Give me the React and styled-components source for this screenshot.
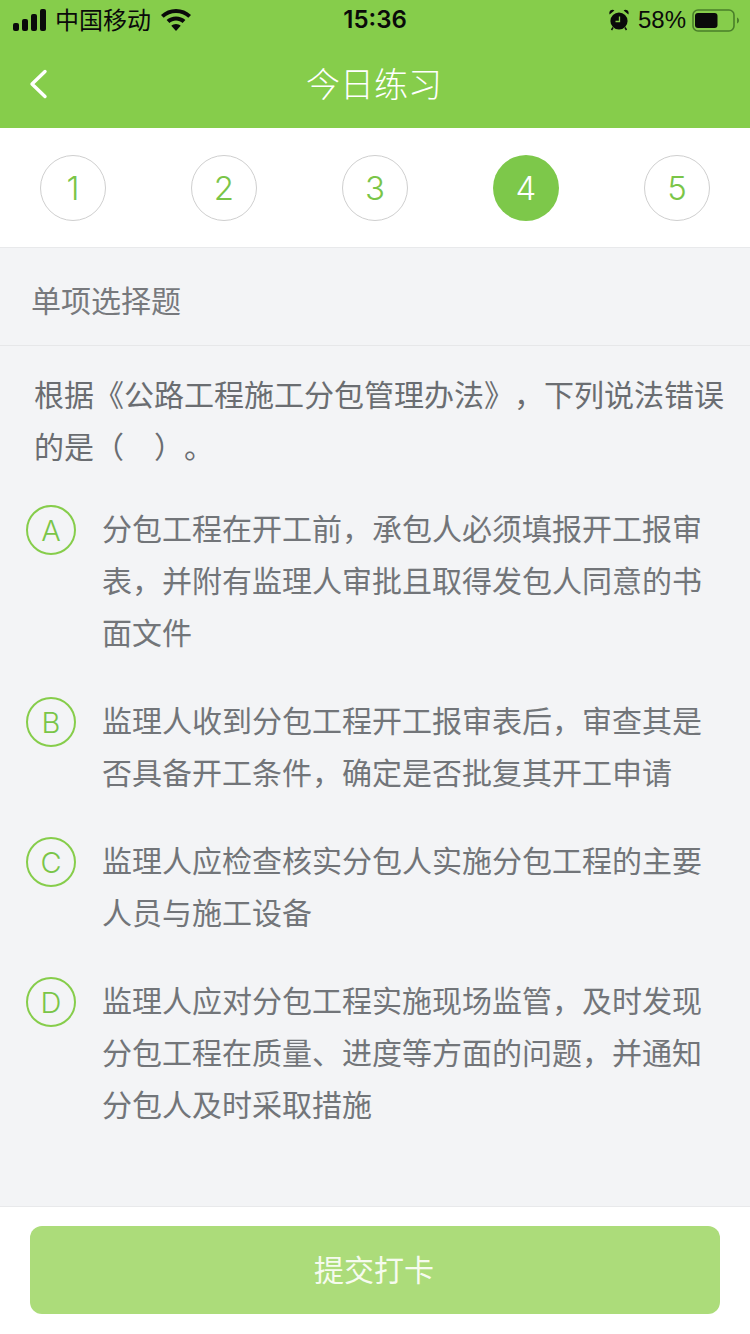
import React from "react";
import styled, { createGlobalStyle } from "styled-components";

const Global = createGlobalStyle`
  html, body { margin: 0; padding: 0; background: #f3f4f6; }
  body { font-family: "Noto Sans CJK SC", "Liberation Sans", sans-serif; text-spacing-trim: space-all; font-kerning: none; }
  * { box-sizing: border-box; }
`;

const Page = styled.div`
  width: 750px;
  height: 1334px;
  display: flex;
  flex-direction: column;
  overflow: hidden;
  background: #f3f4f6;
`;

const Header = styled.header`
  background: #86cd4b;
  height: 128px;
  display: flex;
  flex-direction: column;
`;

const StatusBar = styled.div`
  height: 40px;
  display: grid;
  grid-template-columns: 1fr auto 1fr;
  align-items: center;
  padding: 0 11px 0 13px;
  color: #0a0a0a;
`;

const StatusLeft = styled.div`
  display: flex;
  align-items: center;
  gap: 9px;
  font-size: 24px;
  line-height: 40px;
`;

const Carrier = styled.span`
  margin-right: 1px;
  position: relative;
  top: -1px;
`;

const Time = styled.div`
  font-family: "Inter", "Liberation Sans", sans-serif;
  font-size: 24px;
  font-weight: 600;
  line-height: 40px;
  margin-left: -2px;
`;

const StatusRight = styled.div`
  display: flex;
  align-items: center;
  justify-content: flex-end;
  gap: 10px;
  font-family: "Liberation Sans", sans-serif;
  font-size: 24px;
  line-height: 40px;
`;

const Percent = styled.span`
  margin-right: -4px;
  margin-left: -1px;
`;

const NavBar = styled.div`
  position: relative;
  height: 88px;
  display: flex;
  align-items: center;
  justify-content: center;
  color: #fff;
  font-size: 34px;
  font-weight: 300;
  padding: 0 2px 4px 0;
`;

const Back = styled.button`
  position: absolute;
  left: 28px;
  top: 27px;
  width: 22px;
  height: 34px;
  padding: 0;
  border: 0;
  background: none;
  display: flex;
`;

const Steps = styled.nav`
  height: 120px;
  background: #fff;
  border-bottom: 1px solid #e8e9eb;
  padding: 27px 40px 0;
  display: flex;
  justify-content: space-between;
  align-items: flex-start;
`;

const Step = styled.div`
  width: 66px;
  height: 66px;
  border-radius: 50%;
  border: ${(p) => (p.$active ? "0" : "1px solid #cfcfcf")};
  background: ${(p) => (p.$active ? "#7dc84a" : "#fff")};
  color: ${(p) => (p.$active ? "#fff" : "#7ac548")};
  display: flex;
  align-items: center;
  justify-content: center;
  font-family: "Inter", "Liberation Sans", sans-serif;
  font-weight: 350;
  font-size: 33px;
`;

const Main = styled.main`
  flex: 1;
  min-height: 0;
`;

const SectionTitle = styled.div`
  height: 98px;
  padding: 26px 0 0 31px;
  border-bottom: 1px solid #e6e7e9;
  color: #77797d;
  font-size: 30px;
  font-weight: 400;
  line-height: 50px;
`;

const Question = styled.p`
  margin: 0;
  padding: 21px 20px 0 34px;
  color: #6a6d71;
  font-size: 30px;
  font-weight: 400;
  line-height: 52px;
`;

const Options = styled.ul`
  list-style: none;
  margin: 0;
  padding: 30px 44px 0 26px;
  display: flex;
  flex-direction: column;
  gap: 36px;
`;

const Option = styled.li`
  display: flex;
  align-items: flex-start;
  gap: 26px;
`;

const Letter = styled.span`
  flex: none;
  width: 50px;
  height: 50px;
  margin-top: 4px;
  border-radius: 50%;
  border: 2px solid #86cd4b;
  color: #7ac548;
  display: flex;
  align-items: center;
  justify-content: center;
  font-family: "Inter", "Liberation Sans", sans-serif;
  font-weight: 350;
  font-size: 29px;
`;

const OptionText = styled.span`
  color: #727579;
  font-size: 30px;
  font-weight: 400;
  line-height: 52px;
`;

const Footer = styled.footer`
  height: 128px;
  background: #fff;
  border-top: 1px solid #e8e9eb;
  padding: 19px 30px 0;
`;

const Submit = styled.button`
  width: 100%;
  height: 88px;
  border: 0;
  border-radius: 12px;
  background: #acdc7a;
  color: #f6fbef;
  font-family: inherit;
  font-size: 30px;
  font-weight: 400;
  padding: 0 2px 4px 0;
`;

const Signal = () => (
  <svg width="33" height="22" viewBox="0 0 33 22" fill="#0a0a0a">
    <rect x="0" y="14" width="6" height="8" rx="2" />
    <rect x="9" y="10" width="6" height="12" rx="2" />
    <rect x="18" y="5" width="6" height="17" rx="2" />
    <rect x="27" y="0" width="6" height="22" rx="2" />
  </svg>
);

const Wifi = () => (
  <svg width="30" height="22" viewBox="0 0 30 22" fill="#0a0a0a">
    <path d="M15 0C9.200 0 4 2.200 0 5.900l2.700 2.900C6 5.800 10.300 4 15 4s9 1.800 12.300 4.800L30 5.900C26 2.200 20.800 0 15 0z" />
    <path d="M15 7.500c-3.600 0-6.900 1.400-9.400 3.600l2.800 2.900C10.200 12.400 12.500 11.500 15 11.500s4.800.9 6.600 2.500l2.800-2.900C21.900 8.900 18.600 7.500 15 7.500z" />
    <path d="M15 15c-1.800 0-3.500.7-4.700 1.800L15 22l4.700-5.200C18.500 15.700 16.800 15 15 15z" />
  </svg>
);

const Alarm = () => (
  <svg width="20" height="22" viewBox="0 0 20 22">
    <circle cx="10" cy="12" r="8.600" fill="#0a0a0a" />
    <path d="M10.500 7.500v5H6.500" fill="none" stroke="#86cd4b" strokeWidth="1.300" />
    <path d="M.6 5.500 5.400 1.400C4.400.6 2.900.6 1.700 1.300.4 2.200 0 4 .6 5.500zM19.400 5.500 14.600 1.400c1-.8 2.500-.8 3.700-.1 1.300.9 1.700 2.700 1.100 4.200z" fill="#0a0a0a" />
    <path d="M4 18.500 2.500 21M16 18.500l1.500 2.500" stroke="#0a0a0a" strokeWidth="1.500" />
  </svg>
);

const Battery = () => (
  <svg width="47" height="23" viewBox="0 0 47 23">
    <rect x="1" y="1" width="41" height="21" rx="5" fill="none" stroke="#4a7f2a" strokeWidth="1.600" />
    <rect x="3" y="4" width="22.500" height="15" rx="3" fill="#0a0a0a" />
    <path d="M45 8.500c1.300.5 2 1.600 2 3s-.7 2.500-2 3z" fill="#4a7f2a" />
  </svg>
);

const Chevron = () => (
  <svg width="22" height="34" viewBox="0 0 22 34" fill="none" stroke="#fff" strokeWidth="3.400" strokeLinecap="round" strokeLinejoin="round">
    <path d="M17 4.500 4 17 17 29.500" />
  </svg>
);

const options = [
  ["A", "分包工程在开工前，承包人必须填报开工报审表，并附有监理人审批且取得发包人同意的书面文件"],
  ["B", "监理人收到分包工程开工报审表后，审查其是否具备开工条件，确定是否批复其开工申请"],
  ["C", "监理人应检查核实分包人实施分包工程的主要人员与施工设备"],
  ["D", "监理人应对分包工程实施现场监管，及时发现分包工程在质量、进度等方面的问题，并通知分包人及时采取措施"],
];

export default function App() {
  return (
    <Page>
      <Global />
      <Header>
        <StatusBar>
          <StatusLeft>
            <Signal />
            <Carrier>中国移动</Carrier>
            <Wifi />
          </StatusLeft>
          <Time>15:36</Time>
          <StatusRight>
            <Alarm />
            <Percent>58%</Percent>
            <Battery />
          </StatusRight>
        </StatusBar>
        <NavBar>
          <Back aria-label="返回"><Chevron /></Back>
          今日练习
        </NavBar>
      </Header>
      <Steps>
        {[1, 2, 3, 4, 5].map((n) => (
          <Step key={n} $active={n === 4}>{n}</Step>
        ))}
      </Steps>
      <Main>
        <SectionTitle>单项选择题</SectionTitle>
        <Question>根据《公路工程施工分包管理办法》，下列说法错误的是（　）。</Question>
        <Options>
          {options.map(([l, t]) => (
            <Option key={l}>
              <Letter>{l}</Letter>
              <OptionText>{t}</OptionText>
            </Option>
          ))}
        </Options>
      </Main>
      <Footer>
        <Submit>提交打卡</Submit>
      </Footer>
    </Page>
  );
}
